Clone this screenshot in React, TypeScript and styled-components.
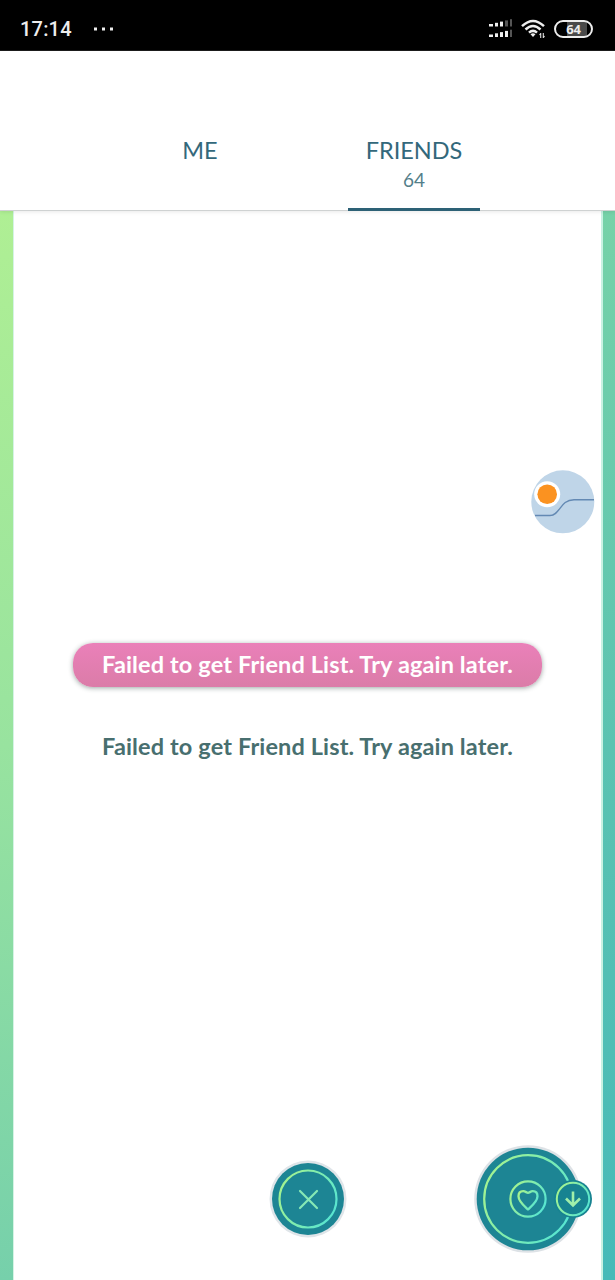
import React from "react";
import styled, { createGlobalStyle } from "styled-components";

const GlobalStyle = createGlobalStyle`
  *, *::before, *::after { box-sizing: border-box; }
  body { margin: 0; background: #fff; }
  button { border: 0; padding: 0; background: none; font: inherit; color: inherit; }
  svg { display: block; }
`;

const Screen = styled.div`
  position: relative;
  display: flex;
  flex-direction: column;
  width: 615px;
  height: 1280px;
  overflow: hidden;
  font-family: Lato, "Open Sans", sans-serif;
  background: #fff;
`;

const StatusBar = styled.header`
  display: flex;
  align-items: center;
  height: 51px;
  padding: 8px 22px 0 20px;
  background: #000;
  border-bottom: 1px solid #1c1c1c;
  color: #ededed;
`;

const Clock = styled.span`
  width: 73px;
  font: 500 20px/24px Roboto, sans-serif;
  letter-spacing: 0.2px;
`;

const StatusIcons = styled.div`
  display: flex;
  align-items: center;
  gap: 9px;
  margin-left: auto;
`;

const Battery = styled.span`
  display: flex;
  align-items: center;
  justify-content: center;
  width: 39px;
  height: 18px;
  border: 2px solid #ededed;
  border-radius: 9px;
  background: linear-gradient(90deg, #000 30%, #4a4a4a 30%, #4a4a4a 88%, #000 88%);
  font: 700 13px/14px "Open Sans", sans-serif;
  letter-spacing: -0.3px;
`;

const Tabs = styled.nav`
  position: relative;
  display: grid;
  grid-template-columns: 132px 132px;
  column-gap: 82px;
  height: 160px;
  padding: 83px 0 0 134px;
  border-bottom: 1px solid #cfd2d2;
  box-shadow: 0 1px 4px rgba(0, 0, 0, 0.09);
  background: #fff;
  color: #33687b;
`;

const Tab = styled.button<{ $active?: boolean }>`
  display: flex;
  flex-direction: column;
  align-items: center;
  height: 77px;
  padding-top: 1px;
  border-bottom: 3px solid ${(p) => (p.$active ? "#2d6176" : "transparent")};
`;

const TabLabel = styled.span`
  font-size: 23.5px;
  line-height: 30px;
`;

const TabCount = styled.span`
  font-size: 19px;
  line-height: 29px;
  color: #547f8a;
`;

const Backdrop = styled.div`
  display: grid;
  grid-template-columns: 13px 1fr 12px;
  flex: 1;
`;

const Edge = styled.div<{ $from: string; $mid: string; $to: string }>`
  background: linear-gradient(178deg, ${(p) => p.$from}, ${(p) => p.$mid} 50%, ${(p) => p.$to});
`;

const Panel = styled.main`
  display: flex;
  flex-direction: column;
  align-items: center;
  padding: 432px 0 27px;
  border-left: 1px solid #d5f3e5;
  border-right: 2px solid #c9f2e3;
  background: #fff;
`;

const Toast = styled.div`
  display: flex;
  align-items: center;
  justify-content: center;
  width: 469px;
  height: 44px;
  padding-bottom: 2px;
  border-radius: 20px;
  background: linear-gradient(#ea80b9, #db7ca8);
  box-shadow: 0 1px 5px rgba(50, 70, 65, 0.48);
  color: #fff;
`;

const Message = styled.span`
  font-size: 23.5px;
  font-weight: 700;
  line-height: 30px;
  letter-spacing: 0.13px;
  white-space: nowrap;
`;

const EmptyMessage = styled(Message)`
  margin-top: 44px;
  color: #486f6f;
`;

const Actions = styled.div`
  display: grid;
  grid-template-columns: 1fr 78px 1fr;
  align-items: center;
  width: 100%;
  margin-top: auto;
`;

const RoundButton = styled.button<{ $size: number }>`
  display: block;
  width: ${(p) => p.$size}px;
  height: ${(p) => p.$size}px;
`;

const FavoriteGroup = styled.div`
  position: relative;
  justify-self: end;
  margin-right: 19px;
`;

const SortBadge = styled.button`
  position: absolute;
  top: 35px;
  left: 80px;
  width: 38px;
  height: 38px;
`;

const AssistBall = styled.button`
  position: absolute;
  top: 470px;
  left: 531px;
  width: 64px;
  height: 64px;
`;

function Signal() {
  const xs = [0, 6, 11, 16, 21];
  return (
    <svg width="23" height="20" viewBox="0 0 23 20" aria-label="signal">
      {xs.map((x, i) => (
        <React.Fragment key={x}>
          <rect x={x} y={5 - i * 1.2} width={i ? 3 : 4} height={2.5 + i * 1.2} fill={i > 2 ? "#555" : "#eee"} />
          <rect x={x} y={15.5 - i * 1.2} width={i ? 3 : 4} height={2.5 + i * 1.2} fill={i > 3 ? "#555" : "#eee"} />
        </React.Fragment>
      ))}
    </svg>
  );
}

function Wifi() {
  return (
    <svg width="24" height="20" viewBox="0 0 24 20" aria-label="wifi">
      <g fill="none" stroke="#eee" strokeWidth="2.5">
        <path d="M1 7.2Q12 -3.2 23 7.2" />
        <path d="M4.5 10.5Q12 3.4 19.5 10.5" />
        <path d="M8 13.7Q12 10 16 13.7" />
      </g>
      <path d="M9.5 15.2Q12 13.2 14.5 15.2L12 18Z" fill="#eee" />
      <path d="M19.7 14v5M22.3 14v5M18.5 16l1.2-1.5M23.5 17l-1.2 1.7" stroke="#ddd" strokeWidth="1.1" />
    </svg>
  );
}

function RingGradient({ id }: { id: string }) {
  return (
    <linearGradient id={id} x1="0" y1="0.25" x2="1" y2="0.75">
      <stop offset="0" stopColor="#a5f38f" />
      <stop offset="1" stopColor="#55e5d3" />
    </linearGradient>
  );
}

export default function App() {
  const message = "Failed to get Friend List. Try again later.";
  return (
    <>
      <GlobalStyle />
      <Screen>
        <StatusBar>
          <Clock>17:14</Clock>
          <svg width="22" height="4" viewBox="0 0 22 4" fill="#eee">
            <path d="M1 .5h3v3H1zM9 .5h3v3H9zM17 .5h3v3h-3z" />
          </svg>
          <StatusIcons>
            <Signal />
            <Wifi />
            <Battery>64</Battery>
          </StatusIcons>
        </StatusBar>
        <Tabs>
          <Tab>
            <TabLabel>ME</TabLabel>
          </Tab>
          <Tab $active>
            <TabLabel>FRIENDS</TabLabel>
            <TabCount>64</TabCount>
          </Tab>
        </Tabs>
        <Backdrop>
          <Edge $from="#afef94" $mid="#98e39f" $to="#76d0ab" />
          <Panel>
            <Toast>
              <Message>{message}</Message>
            </Toast>
            <EmptyMessage>{message}</EmptyMessage>
            <Actions>
              <span />
              <RoundButton $size={78} aria-label="Close">
                <svg width="78" height="78" viewBox="0 0 78 78" fill="none">
                  <defs><RingGradient id="closeRing" /></defs>
                  <circle cx="39" cy="39" r="38.5" fill="#dfe5e9" />
                  <circle cx="39" cy="39" r="36" fill="#1d8594" />
                  <circle cx="39" cy="39" r="28.5" stroke="url(#closeRing)" strokeWidth="2.2" />
                  <path d="M31 31l17 17M48 31L31 48" stroke="#86e8b5" strokeWidth="2.2" strokeLinecap="round" />
                </svg>
              </RoundButton>
              <FavoriteGroup>
                <RoundButton $size={108} aria-label="Favorites">
                  <svg width="108" height="108" viewBox="0 0 108 108" fill="none">
                    <defs><RingGradient id="heartRing" /></defs>
                    <circle cx="54" cy="54" r="53.8" fill="#dde2e6" />
                    <circle cx="54" cy="54" r="51.3" fill="#1d8594" />
                    <g stroke="url(#heartRing)">
                      <circle cx="54" cy="54" r="43.8" strokeWidth="2.2" />
                      <circle cx="54" cy="54" r="17.6" strokeWidth="2.2" />
                      <path d="M54 64.5C50 60.8 44.5 56.4 44.5 51.2C44.5 47.6 46.6 46.2 49.2 46.2C51.5 46.2 52.5 47.8 54 47.8S56.5 46.2 58.8 46.2C61.5 46.2 63.5 47.9 63.5 51.2C63.5 56.4 58 60.8 54 64.5Z" strokeWidth="2.3" strokeLinejoin="round" />
                    </g>
                  </svg>
                </RoundButton>
                <SortBadge aria-label="Sort descending">
                  <svg width="38" height="38" viewBox="0 0 38 38" fill="none">
                    <defs><RingGradient id="sortRing" /></defs>
                    <circle cx="19" cy="19" r="19" fill="#178391" />
                    <circle cx="19" cy="19" r="16.2" stroke="url(#sortRing)" strokeWidth="2" />
                    <path d="M19 11.5v13.5M12 18.5l7 7 7-7" stroke="#a0efaa" strokeWidth="2.6" />
                  </svg>
                </SortBadge>
              </FavoriteGroup>
            </Actions>
          </Panel>
          <Edge $from="#76d2a8" $mid="#5bc3b1" $to="#46bab8" />
        </Backdrop>
        <AssistBall aria-label="Quick ball">
          <svg width="64" height="64" viewBox="0 0 64 64" fill="none">
            <circle cx="31.8" cy="31.8" r="31.5" fill="#bfd5e8" />
            <path d="M4 45.5H19C29 45.5 29 29.7 43 29.7H63" stroke="#6389b3" strokeWidth="1.4" />
            <circle cx="16.2" cy="24.2" r="13" fill="#fff" />
            <circle cx="16.2" cy="24.2" r="9.8" fill="#fb9220" />
          </svg>
        </AssistBall>
      </Screen>
    </>
  );
}
